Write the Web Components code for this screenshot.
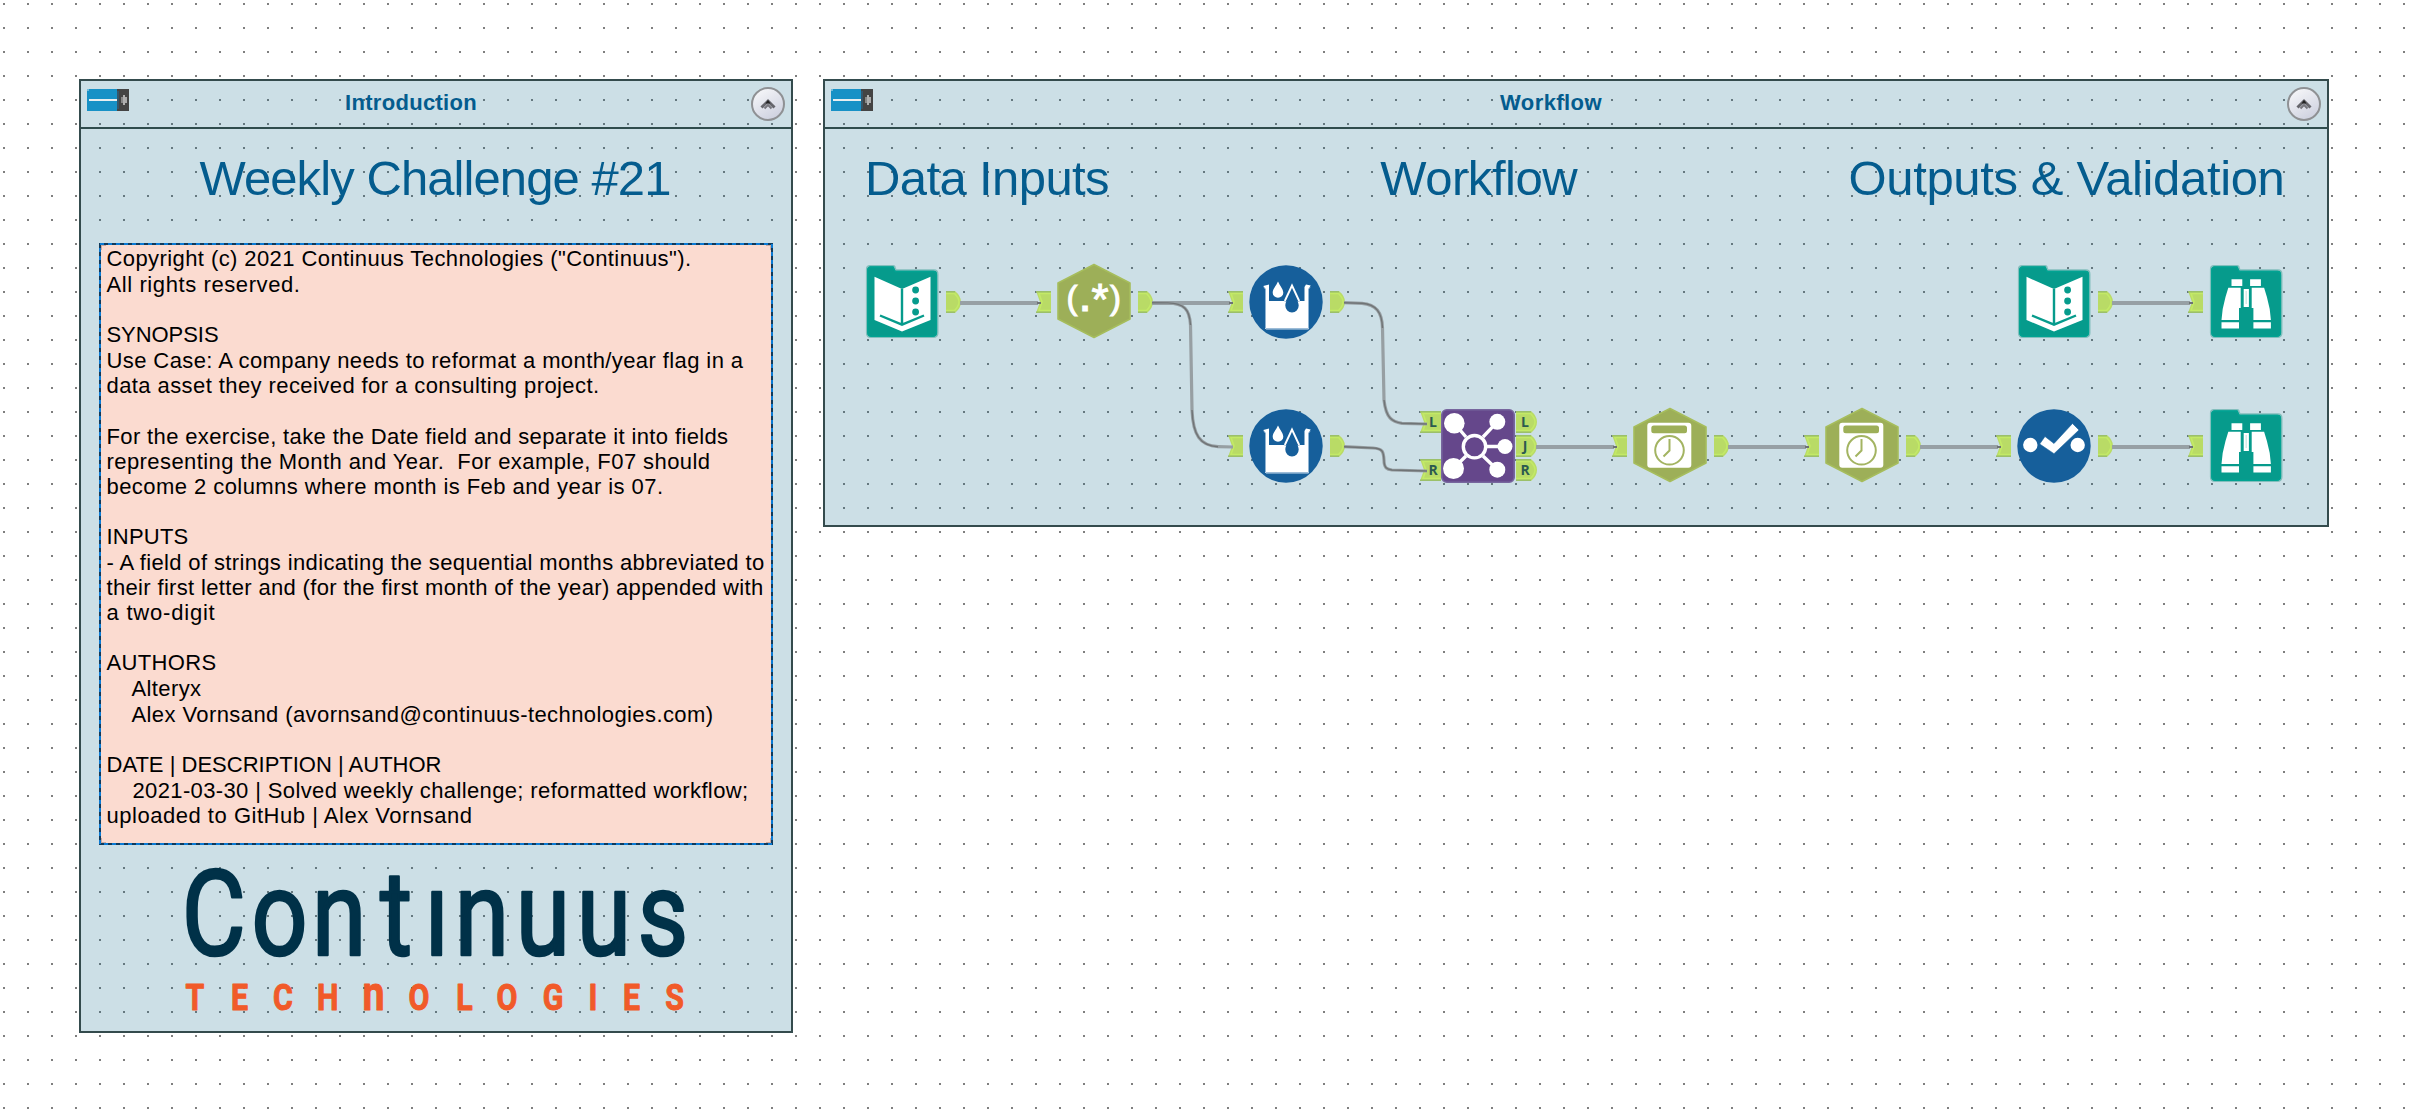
<!DOCTYPE html>
<html lang="en">
<head>
<meta charset="utf-8">
<title>Weekly Challenge #21</title>
<style>
html,body{margin:0;height:100%;background:#fff}
body{font-family:"Liberation Sans",Arial,sans-serif;overflow:hidden}
</style>
</head>
<body>
<design-canvas>
  <tool-container caption="Introduction" capwidth="132" style="width:714px;height:954px">
    <intro-body></intro-body>
  </tool-container>
  <tool-container caption="Workflow" capwidth="102" style="width:1506px;height:448px">
    <workflow-body></workflow-body>
  </tool-container>
</design-canvas>
<script>
const attach = (el, html) => { el.attachShadow({mode:'open'}).innerHTML = html; };

// Text run whose tracking is adjusted so that it spans the given width.
customElements.define('fit-text', class extends HTMLElement {
  connectedCallback() {
    if (!this.shadowRoot) attach(this, `<style>:host{display:block;white-space:pre}span{display:inline-block}</style><span></span>`);
    const s = this.shadowRoot.querySelector('span'), t = this.getAttribute('text'), w = +this.getAttribute('width');
    s.textContent = t;
    if (w && t) {
      const d = w - s.getBoundingClientRect().width;
      s.style.letterSpacing = (d / t.length).toFixed(3) + 'px';
    }
  }
});

customElements.define('design-canvas', class extends HTMLElement {
  connectedCallback() {
    attach(this, `<style>
      :host{display:flex;align-items:flex-start;gap:30px;box-sizing:border-box;width:2409px;height:1116px;padding:79px;
        background:conic-gradient(from 270deg at 2px 2px,#7f7f7f 90deg,transparent 0) 3px 3px/24px 24px,#fff}
    </style><slot></slot>`);
  }
});

customElements.define('switch-icon', class extends HTMLElement {
  connectedCallback() {
    attach(this, `<style>:host{display:block;width:42px;height:22px}svg{display:block}</style>
    <svg width="42" height="22"><rect width="32" height="22" fill="#1791c6"/><rect width="2" height="2" fill="#72bbdb"/>
    <rect x="2" y="10" width="30" height="2" fill="#e8eef0"/><rect x="30" width="12" height="22" fill="#444"/>
    <rect x="30" y="2" width="2" height="18" fill="#35556a"/><rect x="34" y="8" width="6" height="6" fill="#aaa"/><rect x="36" y="6" width="2" height="10" fill="#b0b0b0"/><rect x="34" y="8" width="2" height="6" fill="#888"/></svg>`);
  }
});

customElements.define('collapse-button', class extends HTMLElement {
  connectedCallback() {
    attach(this, `<style>:host{display:block;width:34px;height:34px}svg{display:block}</style>
    <svg width="34" height="34"><defs><linearGradient id="g" x1="0" y1="0" x2=".6" y2="1"><stop offset="0" stop-color="#fbfbfc"/><stop offset="1" stop-color="#cfd2e0"/></linearGradient></defs>
    <circle cx="17" cy="17" r="16" fill="url(#g)" stroke="#8f9194" stroke-width="2"/>
    <path d="M10.500 20.500 17 14l6.500 6.500" fill="none" stroke="#66666c" stroke-width="3"/>
    <path d="M13.500 21.500 17 18l3.500 3.500" fill="none" stroke="#77777e" stroke-width="2"/><path d="M14.500 16.500 17 13l2.500 3.500z" fill="#222"/></svg>`);
  }
});

customElements.define('tool-container', class extends HTMLElement {
  connectedCallback() {
    attach(this, `<style>
      :host{display:flex;flex-direction:column;flex:none;position:relative;box-sizing:border-box;border:2px solid #344b4d;background:rgba(0,95,128,.2);background-clip:padding-box}
      header{display:flex;align-items:flex-start;justify-content:space-between;flex:none;height:46px;padding:0 6px;border-bottom:2px solid #2f4c4d}
      switch-icon{margin-top:8px}
      collapse-button{margin-top:6px}
      fit-text{margin-right:58px;margin-top:10px;line-height:24px;font-size:22px;font-weight:bold;color:#045c8e}
    </style>
    <header><switch-icon></switch-icon><fit-text text="${this.getAttribute('caption')}" width="${this.getAttribute('capwidth')}"></fit-text><collapse-button></collapse-button></header>
    <slot></slot>`);
  }
});

// [text, line height, width]
const NOTE = [
  ['Copyright (c) 2021 Continuus Technologies ("Continuus").',26,585],
  ['All rights reserved.',26,194],
  ['',24,0],
  ['SYNOPSIS',26,112],
  ['Use Case: A company needs to reformat a month/year flag in a',26,637],
  ['data asset they received for a consulting project.',24,493],
  ['',26,0],
  ['For the exercise, take the Date field and separate it into fields',26,622],
  ['representing the Month and Year.  For example, F07 should',24,604],
  ['become 2 columns where month is Feb and year is 07.',26,557],
  ['',24,0],
  ['INPUTS',26,82],
  ['- A field of strings indicating the sequential months abbreviated to',26,658],
  ['their first letter and (for the first month of the year) appended with',24,657],
  ['a two-digit',26,109],
  ['',24,0],
  ['AUTHORS',26,110],
  ['    Alteryx',26,95],
  ['    Alex Vornsand (avornsand@continuus-technologies.com)',26,607],
  ['',24,0],
  ['DATE | DESCRIPTION | AUTHOR',26,335],
  ['    2021-03-30 | Solved weekly challenge; reformatted workflow;',26,642],
  ['uploaded to GitHub | Alex Vornsand',24,366]
];

customElements.define('comment-note', class extends HTMLElement {
  connectedCallback() {
    attach(this, `<style>
      :host{display:block;box-sizing:border-box;position:relative;width:674px;height:602px;padding:3px 0 0 7.500px;background:#fbdbd0;font-size:22px;color:#000}
      svg{position:absolute;inset:0}
    </style>
    ${NOTE.map(([t,h,w]) => `<fit-text text="${t.replace(/"/g,'&quot;')}" width="${w}" style="height:${h}px;line-height:${h}px"></fit-text>`).join('')}
    <svg width="674" height="602" fill="none" stroke-width="2"><path d="M2 7V2H7M667 2H672V7M2 595V600H7M667 600H672V595" stroke="#caa9a0"/><rect x="1" y="1" width="672" height="600" stroke="#0f3a5c"/><rect x="1" y="1" width="672" height="600" stroke="#0a7ad4" stroke-dasharray="4 4"/></svg>`);
  }
});

customElements.define('brand-logo', class extends HTMLElement {
  connectedCallback() {
    const xs = (a, k) => a.map(v => ((v - 81) / k).toFixed(1)).join(' ');
    attach(this, `<style>:host{display:block;width:710px;height:186px}svg{display:block}text{font-family:Roboto,sans-serif;text-anchor:middle;stroke-linejoin:round;stroke-linecap:round}</style>
    <svg width="710" height="186" viewBox="0 845 710 186" role="img" aria-label="Continuus Technologies">
      <text transform="scale(.83 1)" x="${xs([213.700,279.500,339.300,396,437,482,543,604,663],.83)}" y="955" font-size="118.500" fill="#003148" stroke="#003148" stroke-width="2.600">Contınuus</text>
      <text transform="scale(.82 1)" x="${xs([195,239.500,283,327.700,373.500,419,464.500,507,553,593,631.500,674.500],.82)}" y="1010.500" font-size="37" font-weight="700" fill="#f15a29" stroke="#f15a29" stroke-width="1">TECH<tspan font-size="48">n</tspan>OLOGIES</text>
    </svg>`);
  }
});

customElements.define('intro-body', class extends HTMLElement {
  connectedCallback() {
    attach(this, `<style>
      :host{display:flex;flex-direction:column;flex:1}
      .title{height:91px;padding:23px 0 0 118.500px;font-size:49px;line-height:52px;color:#045c8e}
      comment-note{margin-left:18px}
    </style>
    <fit-text class="title" text="Weekly Challenge #21" width="471"></fit-text>
    <comment-note></comment-note>
    <brand-logo></brand-logo>`);
  }
});

const FOLDER = `<path d="M5 .7H28Q30 .7 30 3L31 5H69Q72.700 5 72.700 9V68Q72.700 72.300 68 72.300H6Q1.700 72.300 1.700 68V4Q1.700 .7 5 .7Z" fill="#069b8c" stroke="#83bfbd" stroke-width="1.600"/>
  <path d="M5 2H28L30 6.500H68Q71.500 6.500 71.500 10V67.500Q71.500 71.300 67.500 71.300H6.500Q2.700 71.300 2.700 67.500V4Z" fill="none" stroke="#02a392" stroke-width="1.300"/>`;
const HEX = `<path d="M37-.5 73 18V54L37 72.500 1 54V18Z" fill="#9daf58" stroke="#a6bd5c" stroke-width="1.600" stroke-linejoin="round"/>`;
const DISC = `<circle cx="37" cy="37" r="36.700" fill="#165f9b"/>`;
const BINO = `<path d="M22.500 14.300H33.300V21H22.500ZM19.300 22.700H31.700V43H30V55H12.500Q13 44 16.500 32ZM12.500 57.300H30V63.500H12.500Z"/>`;
const ICONS = {
  input: FOLDER + `<path d="M9.500 11.800 37 24 65.500 11.800V55L37 66.500 9.500 55Z" fill="#fff"/>
    <path d="M37 24V59M15 50.500 37 59.700 59 50.500" fill="none" stroke="#069b8c" stroke-width="2.400"/>
    <g fill="#069b8c"><circle cx="50.600" cy="25" r="3.400"/><circle cx="50.600" cy="36" r="3.400"/><circle cx="50.600" cy="47" r="3.400"/></g>`,
  browse: FOLDER + `<g fill="#fff">${BINO}<g transform="matrix(-1 0 0 1 74.400 0)">${BINO}</g><rect x="34.700" y="24" width="5.200" height="18"/></g><rect x="36.500" y="26" width="1.400" height="13" fill="#cfe9e6"/>`,
  regex: HEX + `<text fill="#fff" stroke="#fff" stroke-width="1" font-size="33" text-anchor="middle" x="15 28 43 58.500" y="43.500 45.500 50 43.500">(<tspan font-weight="bold">.</tspan><tspan font-size="44">*</tspan>)</text>`,
  cleanse: DISC + `<path d="M14.300 21 20 19.500V36H55.500V22L57 19.500 61.700 20.500 60 23.500V63.800H16V23.500Z" fill="#fff"/>
    <path d="M17 64H59.500" stroke="#8fb3d2" stroke-width="1.500"/><path d="M15 22.500 16.500 24V63M61 22.500 59.500 24V63" fill="none" stroke="#8fb3d2"/>
    <path d="M29 16.500C31 21 34.300 24 34.300 27.800A5.300 5 0 0 1 23.700 27.800C23.700 24 27 21 29 16.500Z" fill="#fff"/>
    <path d="M35.500 36.500 43 21 50.500 36.500Z" fill="#165f9b"/><path d="M35.800 36 43 20.500 50.200 36" fill="none" stroke="#fff" stroke-width="1.900"/>
    <path d="M43 25.500C45 32 49.700 35.500 49.700 40.500A6.700 6.900 0 0 1 36.300 40.500C36.300 35.500 41 32 43 25.500Z" fill="#165f9b"/>`,
  join: `<rect x=".8" y=".8" width="72.400" height="72.400" rx="5" fill="#65478b" stroke="#77669e" stroke-width="1.600"/>
    <g stroke="#fff" stroke-width="3.400" fill="none"><path d="M13.300 14.300 25 28M12.300 59.500 25 47M56.300 12.800 42 28M64 37.500H46M56.300 60.700 42 47"/><circle cx="33.500" cy="37.700" r="11.200"/></g>
    <g fill="#fff"><circle cx="13.300" cy="14.300" r="10.300"/><circle cx="12.500" cy="59.500" r="10.500"/><circle cx="56.300" cy="12.800" r="8"/><circle cx="64" cy="37.500" r="7.500"/><circle cx="56.300" cy="60.700" r="8"/></g>`,
  date: HEX + `<rect x="14.300" y="13.700" width="44" height="45" rx="3" fill="#fff"/><rect x="18.300" y="16.500" width="35.700" height="7.700" rx="2.500" fill="#9daf58"/>
    <g fill="none" stroke="#a3b462" stroke-width="2"><circle cx="36.500" cy="41.300" r="14.300"/><path d="M36.500 30V41.500L30.500 47.500"/></g>`,
  select: DISC + `<g fill="#fff"><circle cx="13.300" cy="36" r="7.200"/><circle cx="60.700" cy="36" r="7.200"/></g><path d="M28 27.500 37 34.500 55.500 14.500 62 21 37 44.700 22.700 35Z" fill="#fff" stroke="#165f9b" stroke-width=".6"/>`
};

customElements.define('tool-port', class extends HTMLElement {
  connectedCallback() {
    const out = this.getAttribute('side') === 'out', label = this.getAttribute('label') || '', w = label ? 21 : 15;
    const d = out ? `M0 0H${w-6}Q${w} 5 ${w} 11T${w-6} 22H0Z` : `M0 0H${w}V22H0L4 11Z`;
    const edge = out ? `M0 .8H${w-6}M0 21.200H${w-6}` : `M0 .8H${w}M0 21.200H${w}`;
    const rim = out ? `M0 2.500H${w-6.5}Q${w-2} 7 ${w-2} 11T${w-6.5} 19.500H0` : `M${w} 2.500H3L6 11 3 19.500H${w}`;
    attach(this, `<style>:host{display:block;width:${w}px;height:22px}svg{display:block}text{font:bold 14px "Open Sans",sans-serif}</style>
      <svg width="${w}" height="22"><path d="${d}" fill="#b9db66"/><path d="${rim}" fill="none" stroke="#c3ea66" stroke-width="1.500"/><path d="${edge}" stroke="#9bc06a" stroke-width="1.600"/>
      ${label ? `<text x="${out?9:13}" y="15.500" text-anchor="middle" fill="#2c5a50">${label}</text>` : ''}</svg>`);
  }
});

customElements.define('tool-node', class extends HTMLElement {
  connectedCallback() {
    const kind = this.getAttribute('kind');
    const ports = (side) => (this.getAttribute(side) ?? '').split(',').filter(Boolean)
      .map(p => `<tool-port side="${side}" label="${p === '-' ? '' : p === '_' ? '' : p}" ${p === '_' ? 'style="visibility:hidden"' : ''}></tool-port>`).join('');
    // The node is centred on its own canvas position.
    attach(this, `<style>
      :host{position:absolute;display:grid;grid-template-columns:58px 74px 60px;width:192px;height:74px;margin:-37px 0 0 -95px}
      .p{display:flex;flex-direction:column;justify-content:center;gap:2px}
      .in{align-items:flex-end;padding-right:${kind === 'join' ? 0 : 6}px}
      .out{align-items:flex-start;padding-left:${kind === 'join' ? 1 : 7}px}
      svg{display:block;overflow:visible;font-family:"Liberation Sans",Arial,sans-serif}
    </style>
    <div class="p in">${ports('in')}</div><svg width="74" height="74">${ICONS[kind]}</svg><div class="p out">${ports('out')}</div>`);
  }
});

const NODES = [
  ['input',77,221,'','-'],['regex',269,221,'-','-'],['cleanse',461,221,'-','-'],['input',1229,221,'','-'],['browse',1421,221,'-',''],
  ['cleanse',461,365,'-','-'],['join',653,365,'L,_,R','L,J,R'],['date',845,365,'-','-'],['date',1037,365,'-','-'],['select',1229,365,'-','-'],['browse',1421,365,'-','']
];

customElements.define('workflow-body', class extends HTMLElement {
  connectedCallback() {
    attach(this, `<style>
      :host{display:block;flex:1}
      .heads{display:flex;justify-content:space-between;padding:23px 42.500px 0 40px;font-size:49px;line-height:52px;color:#045c8e}
      .wires{position:absolute;left:0;top:0;fill:none}
    </style>
    <div class="heads"><fit-text text="Data Inputs" width="244"></fit-text><fit-text text="Workflow" width="197"></fit-text><fit-text text="Outputs &amp; Validation" width="436"></fit-text></div>
    ${NODES.map(([k,x,y,i,o]) => `<tool-node kind="${k}" in="${i}" out="${o}" style="left:${x}px;top:${y}px"></tool-node>`).join('')}
    <svg class="wires" width="1502" height="444" viewBox="825 81 1502 444">
      <path stroke="#97a0a5" stroke-width="4" d="M960 303H1038M1152 303H1230M2112 303H2190M1536 447H1614M1728 447H1806M1920 447H1998M2112 447H2190"/>
      <path stroke="#6d7274" stroke-width="2" d="M1037 303H1041M1229 303H1233M2189 303H2193M1613 447H1617M1805 447H1809M1997 447H2001M2189 447H2193"/>
      <g stroke="#979fa3" stroke-width="3.200"><path d="M1152 302.700 1168 302.900C1184 303.500 1189.500 309 1190.500 325L1192 410C1193 435 1200 446 1218 446.700L1233 447"/>
      <path d="M1344 302.700 1362 303.300C1376 304.500 1382 312 1382.500 328L1384 400C1386 418 1392 422 1402 423.300L1427 424"/>
      <path d="M1344 446.700 1373 448C1383 448.500 1383.500 452 1384 460 1384 468 1387 469.500 1392 470L1427 471"/></g>
      <g stroke="#707476" stroke-width="1.400"><path d="M1152 302.700 1168 302.900C1184 303.500 1189.500 309 1190.500 325M1192 410C1193 435 1200 446 1218 446.700"/>
      <path d="M1344 302.700 1362 303.300C1376 304.500 1382 312 1382.500 328M1384 400C1386 418 1392 422 1402 423.300L1427 424"/>
      <path d="M1344 446.700 1373 448C1383 448.500 1383.500 452 1384 460 1384 468 1387 469.500 1392 470L1427 471"/></g>
    </svg>`);
  }
});
</script>
</body>
</html>
